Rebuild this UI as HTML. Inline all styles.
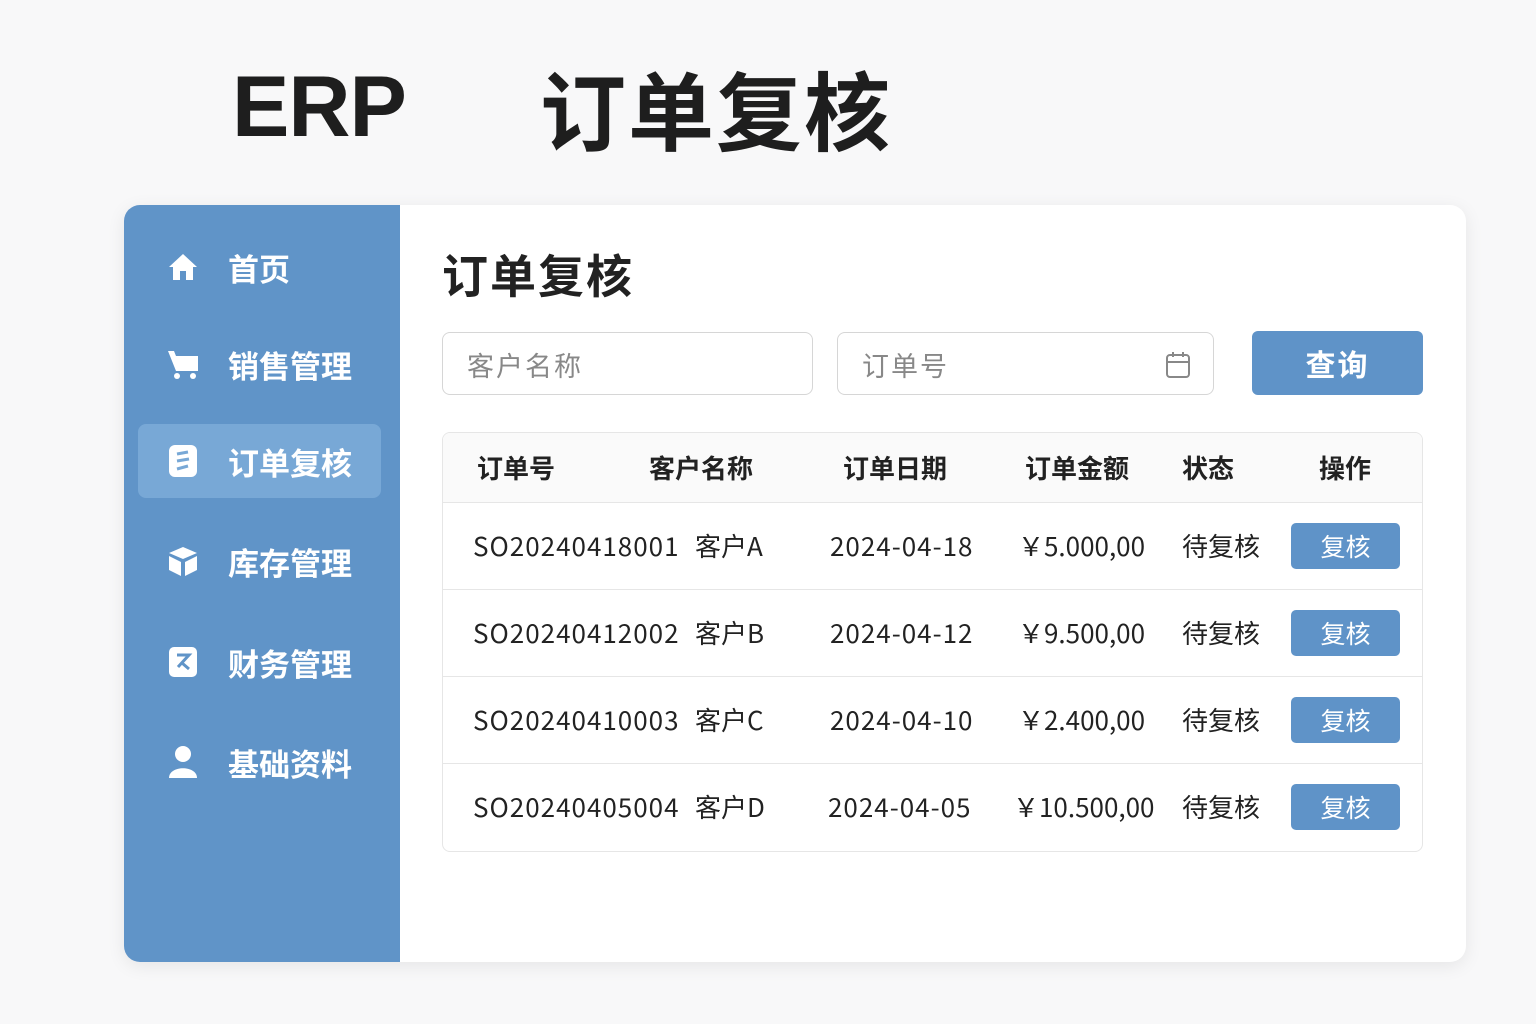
<!DOCTYPE html>
<html><head><meta charset="utf-8"><style>
*{margin:0;padding:0;box-sizing:border-box}
body{width:1536px;height:1024px;background:#f8f8f9;font-family:"Liberation Sans","Noto Sans CJK SC",sans-serif;position:relative;overflow:hidden;color:#222}
.abs{position:absolute}
.t1{left:232px;top:58px;font-size:86px;font-weight:bold;color:#1e1e1e;letter-spacing:-1px}
.t2{left:540px;top:44px;font-size:86px;font-weight:bold;color:#1e1e1e;letter-spacing:2px}
.card{left:124px;top:205px;width:1342px;height:757px;background:#fff;border-radius:16px;box-shadow:0 4px 18px rgba(0,0,0,.08);overflow:hidden}
.side{left:0;top:0;width:276px;height:757px;background:#6094c8}
.nav{position:absolute;left:14px;width:243px;height:74px;color:#fff;font-size:31px;font-weight:bold;display:flex;align-items:center}
.nav .ic{width:90px;display:flex;justify-content:center}
.active{background:#78a8d6;border-radius:8px}
.h{left:318px;top:36px;font-size:46px;font-weight:bold;color:#222;letter-spacing:2px}
.inp{top:127px;height:63px;border:1.5px solid #d6d6d6;border-radius:8px;font-size:27px;color:#888;padding-left:24px;line-height:64px;letter-spacing:2px;font-family:"Noto Sans CJK SC",sans-serif}
.btn{left:1128px;top:126px;width:171px;height:64px;background:#5f93c8;border-radius:6px;color:#fff;font-size:30px;text-align:center;line-height:64px;font-weight:bold;letter-spacing:2px;font-family:"Noto Sans CJK SC",sans-serif}
.tbl{left:318px;top:227px;width:981px;height:420px;border:1.5px solid #e6e6e6;border-radius:8px;overflow:hidden;font-family:"Noto Sans CJK SC",sans-serif}
.hd{position:absolute;left:0;top:0;width:100%;height:70px;background:#fafafa;border-bottom:1.5px solid #e6e6e6}
.hd div{position:absolute;top:0;line-height:70px;font-size:26px;font-weight:bold;color:#222}
.row{position:absolute;left:0;width:100%;height:87px;border-bottom:1.5px solid #e6e6e6}
.row div{position:absolute;top:0;line-height:86px;font-size:26px;color:#222}
.row div.s{letter-spacing:1px}
.row .b{left:848px;top:20px;width:109px;height:46px;background:#5f93c8;border-radius:5px;color:#fff;text-align:center;line-height:46px;font-size:25px}
</style></head><body>
<div class="abs t1">ERP</div>
<div class="abs t2">订单复核</div>
<div class="abs card">
 <div class="abs side">
  <div class="nav" style="top:25px"><div class="ic"><svg width="32" height="32" viewBox="0 0 32 32"><path d="M16 3 L30 16 H26 V29 H19 V20 H13 V29 H6 V16 H2 Z" fill="#fff"/></svg></div><span>首页</span></div>
  <div class="nav" style="top:122px"><div class="ic"><svg width="34" height="34" viewBox="0 0 34 34"><path d="M2 4 H8 L10 9 H32 V24 H10 Z" fill="#fff"/><circle cx="11" cy="29" r="3" fill="#fff"/><circle cx="27" cy="29" r="3" fill="#fff"/></svg></div><span>销售管理</span></div>
  <div class="nav active" style="top:219px"><div class="ic"><svg width="30" height="34" viewBox="0 0 30 34"><rect x="1" y="1" width="28" height="32" rx="6" fill="#fff"/><path d="M9 10 L20 8 M9 17 L21 15 M9 25 L20 22" stroke="#78a8d6" stroke-width="3"/></svg></div><span>订单复核</span></div>
  <div class="nav" style="top:319px"><div class="ic"><svg width="32" height="32" viewBox="0 0 32 32"><path d="M16 2 L30 8 L16 14 L2 8 Z M2 11 L14 17 V31 L2 25 Z M30 11 L18 17 V31 L30 25 Z" fill="#fff"/></svg></div><span>库存管理</span></div>
  <div class="nav" style="top:420px"><div class="ic"><svg width="30" height="32" viewBox="0 0 30 32"><rect x="1" y="1" width="28" height="30" rx="5" fill="#fff"/><path d="M9 9 H21 L10 21 M14 17 L21 23" stroke="#6094c8" stroke-width="3" fill="none"/></svg></div><span>财务管理</span></div>
  <div class="nav" style="top:520px"><div class="ic"><svg width="30" height="34" viewBox="0 0 30 34"><circle cx="15" cy="9" r="8" fill="#fff"/><path d="M1 33 C1 20 29 20 29 33 Z" fill="#fff"/></svg></div><span>基础资料</span></div>
 </div>
 <div class="abs h">订单复核</div>
 <div class="abs inp" style="left:318px;width:371px">客户名称</div>
 <div class="abs inp" style="left:713px;width:377px">订单号<svg style="position:absolute;right:22px;top:18px" width="26" height="28" viewBox="0 0 26 28"><rect x="2" y="4" width="22" height="22" rx="3" fill="none" stroke="#888" stroke-width="2"/><path d="M2 11 H24 M8 1 V6 M18 1 V6" stroke="#888" stroke-width="2"/></svg></div>
 <div class="abs btn">查询</div>
 <div class="abs tbl">
  <div class="hd"><div style="left:34px">订单号</div><div style="left:206px">客户名称</div><div style="left:400px">订单日期</div><div style="left:582px">订单金额</div><div style="left:739px">状态</div><div style="left:876px">操作</div></div>
  <div class="row" style="top:70px"><div class="s" style="left:30px">SO20240418001</div><div style="left:252px">客户A</div><div class="s" style="left:387px">2024-04-18</div><div style="left:575px">￥5.000,00</div><div style="left:739px">待复核</div><div class="b">复核</div></div>
  <div class="row" style="top:157px"><div class="s" style="left:30px">SO20240412002</div><div style="left:252px">客户B</div><div class="s" style="left:387px">2024-04-12</div><div style="left:575px">￥9.500,00</div><div style="left:739px">待复核</div><div class="b">复核</div></div>
  <div class="row" style="top:244px"><div class="s" style="left:30px">SO20240410003</div><div style="left:252px">客户C</div><div class="s" style="left:387px">2024-04-10</div><div style="left:575px">￥2.400,00</div><div style="left:739px">待复核</div><div class="b">复核</div></div>
  <div class="row" style="top:331px;border-bottom:none"><div class="s" style="left:30px">SO20240405004</div><div style="left:252px">客户D</div><div class="s" style="left:385px">2024-04-05</div><div style="left:570px">￥10.500,00</div><div style="left:739px">待复核</div><div class="b">复核</div></div>
 </div>
</div>
</body></html>
